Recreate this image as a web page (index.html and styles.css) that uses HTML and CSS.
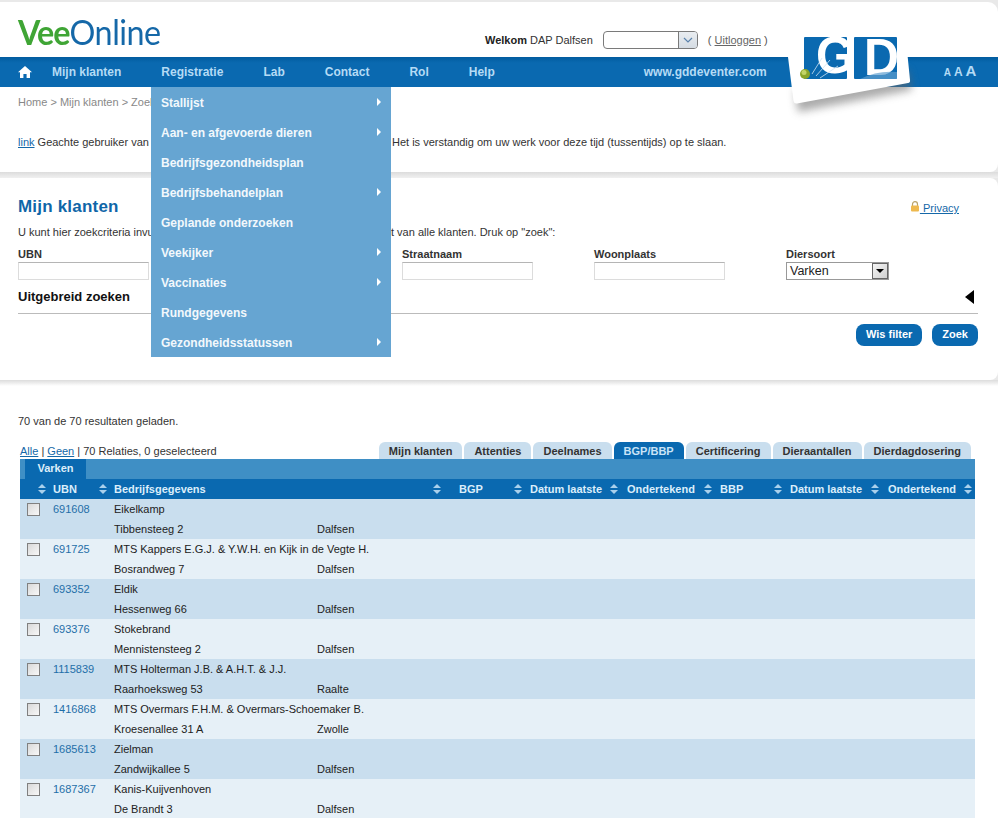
FILE: index.html
```html
<!DOCTYPE html>
<html>
<head>
<title>VeeOnline</title>
<link rel="stylesheet" href="styles.css">
</head>
<body>

<div class="top_area">
  <div class="card head_card">
    <div class="head_row">
      <div class="logo"><span class="logo_vee">Vee</span><span class="logo_online">Online</span></div>
      <div class="welcome">
        <span><b>Welkom</b> DAP Dalfsen</span>
        <span class="role_select"><span class="role_btn"><svg width="10" height="6" viewBox="0 0 10 6"><path d="M1 1 L5 5 L9 1" fill="none" stroke="#5b83ad" stroke-width="1.2"/></svg></span></span>
        <span class="logout">( <a href="#">Uitloggen</a> )</span>
      </div>
    </div>

    <div class="nav">
      <a class="nav_home" href="#"><svg width="14" height="12" viewBox="0 0 14 12"><path d="M7 0 L14 6.2 L12 6.2 L12 12 L8.6 12 L8.6 8 L5.4 8 L5.4 12 L2 12 L2 6.2 L0 6.2 Z" fill="#fff"/></svg></a>
      <a href="#">Mijn klanten</a>
      <a href="#">Registratie</a>
      <a href="#">Lab</a>
      <a href="#">Contact</a>
      <a href="#">Rol</a>
      <a href="#">Help</a>
      <a class="nav_site" href="#">www.gddeventer.com</a>
      <span class="font_sizes"><span class="fs_s">A</span><span class="fs_m">A</span><span class="fs_l">A</span></span>
    </div>

    <div class="crumbs">Home &gt; Mijn klanten &gt; Zoek</div>
    <div class="notice">
      <span class="notice_left"><a href="#">link</a> Geachte gebruiker van</span>
      <span>Het is verstandig om uw werk voor deze tijd (tussentijds) op te slaan.</span>
    </div>

    <ul class="menu">
      <li class="has_sub">Stallijst</li>
      <li class="has_sub">Aan- en afgevoerde dieren</li>
      <li>Bedrijfsgezondheidsplan</li>
      <li class="has_sub">Bedrijfsbehandelplan</li>
      <li>Geplande onderzoeken</li>
      <li class="has_sub">Veekijker</li>
      <li class="has_sub">Vaccinaties</li>
      <li>Rundgegevens</li>
      <li class="has_sub">Gezondheidsstatussen</li>
    </ul>

    <svg class="gd_logo" width="150" height="110" viewBox="780 20 150 110">
      <defs>
        <filter id="soft" x="-20%" y="-20%" width="140%" height="140%"><feGaussianBlur stdDeviation="4"/></filter>
        <clipPath id="gd_squares"><rect x="854" y="37" width="43" height="42"/></clipPath>
      </defs>
      <path d="M798 112 L912 90 L908 70 L795 90 Z" fill="#666" opacity="0.55" filter="url(#soft)"/>
      <path d="M788 57 L792 30 L905 30 L910 80 Q910.500 82.500 908 83 L797 103.500 Q794 104 793.500 101 Z" fill="#fff"/>
      <rect x="804" y="37" width="43" height="42" rx="1" fill="#0a69b0"/>
      <rect x="854" y="37" width="43" height="42" rx="1" fill="#0a69b0"/>
      <text x="816" y="73" class="gd_letter" textLength="38" lengthAdjust="spacingAndGlyphs">G</text>
      <rect x="847" y="30" width="7" height="50" fill="#fff"/>
      <g clip-path="url(#gd_squares)"><text x="864" y="75" class="gd_letter" textLength="35" lengthAdjust="spacingAndGlyphs">D</text></g>
      <path d="M812 74 L822 58 M816 76 L830 60 M820 78 L838 66" stroke="#cfe3f2" stroke-width="0.8" fill="none"/>
      <path d="M860 79 Q878 70 897 72 L897 79 Z" fill="#5f9fd0" opacity="0.7"/>
      <circle cx="805" cy="74" r="5" fill="#8aa52a"/>
      <circle cx="804" cy="72.500" r="2.500" fill="#c2d468"/>
    </svg>
  </div>

  <div class="gap_band"></div>

  <div class="card search_card">
    <div class="title_row">
      <h1>Mijn klanten</h1>
      <a class="privacy" href="#"><svg width="10" height="11" viewBox="0 0 10 11"><path d="M2.500 5 V3.200 a2.500 2.500 0 0 1 5 0 V5" fill="none" stroke="#b9a36a" stroke-width="1.200"/><rect x="1" y="4.500" width="8" height="6" rx="1" fill="#eeb94f"/></svg> Privacy</a>
    </div>
    <div class="intro">
      <span class="intro_left">U kunt hier zoekcriteria invullen</span>
      <span>t van alle klanten. Druk op "zoek":</span>
    </div>
    <div class="fields">
      <div class="field"><label>UBN</label><span class="input"></span></div>
      <div class="field"><label></label><span class="input"></span></div>
      <div class="field"><label>Straatnaam</label><span class="input"></span></div>
      <div class="field"><label>Woonplaats</label><span class="input"></span></div>
      <div class="field"><label>Diersoort</label>
        <span class="select">Varken<span class="select_btn"><i></i></span></span>
      </div>
    </div>
    <div class="more_row">
      <h2>Uitgebreid zoeken</h2>
      <i class="more_arrow"></i>
    </div>
    <div class="btn_row">
      <a class="btn" href="#">Wis filter</a>
      <a class="btn" href="#">Zoek</a>
    </div>
  </div>
</div>
<div class="bottom_band"></div>

<div class="results">
  <p class="loaded">70 van de 70 resultaten geladen.</p>

  <div class="tab_row">
    <div class="selection"><a href="#">Alle</a> | <a href="#">Geen</a> | 70 Relaties, 0 geselecteerd</div>
    <div class="tabs">
      <a href="#">Mijn klanten</a>
      <a href="#">Attenties</a>
      <a href="#">Deelnames</a>
      <a class="active" href="#">BGP/BBP</a>
      <a href="#">Certificering</a>
      <a href="#">Dieraantallen</a>
      <a href="#">Dierdagdosering</a>
    </div>
  </div>

  <div class="sub_tabs"><span>Varken</span></div>

  <table class="grid">
    <colgroup>
      <col class="c1"><col class="c2"><col class="c3"><col class="c4"><col class="c5"><col class="c6"><col class="c7"><col class="c8"><col class="c9">
    </colgroup>
    <thead>
      <tr>
        <th><div class="th_in"><span></span><svg class="sort" width="8" height="10" viewBox="0 0 8 10"><path d="M4 0 L8 4 L0 4 Z M0 6 L8 6 L4 10 Z"/></svg></div></th>
        <th><div class="th_in"><span>UBN</span><svg class="sort" width="8" height="10" viewBox="0 0 8 10"><path d="M4 0 L8 4 L0 4 Z M0 6 L8 6 L4 10 Z"/></svg></div></th>
        <th><div class="th_in"><span>Bedrijfsgegevens</span><svg class="sort" width="8" height="10" viewBox="0 0 8 10"><path d="M4 0 L8 4 L0 4 Z M0 6 L8 6 L4 10 Z"/></svg></div></th>
        <th class="th_bgp"><div class="th_in"><span>BGP</span><svg class="sort" width="8" height="10" viewBox="0 0 8 10"><path d="M4 0 L8 4 L0 4 Z M0 6 L8 6 L4 10 Z"/></svg></div></th>
        <th class="th_date"><div class="th_in"><span>Datum laatste</span><svg class="sort" width="8" height="10" viewBox="0 0 8 10"><path d="M4 0 L8 4 L0 4 Z M0 6 L8 6 L4 10 Z"/></svg></div></th>
        <th class="th_ond"><div class="th_in"><span>Ondertekend</span><svg class="sort" width="8" height="10" viewBox="0 0 8 10"><path d="M4 0 L8 4 L0 4 Z M0 6 L8 6 L4 10 Z"/></svg></div></th>
        <th class="th_date"><div class="th_in"><span>BBP</span><svg class="sort" width="8" height="10" viewBox="0 0 8 10"><path d="M4 0 L8 4 L0 4 Z M0 6 L8 6 L4 10 Z"/></svg></div></th>
        <th class="th_date"><div class="th_in"><span>Datum laatste</span><svg class="sort" width="8" height="10" viewBox="0 0 8 10"><path d="M4 0 L8 4 L0 4 Z M0 6 L8 6 L4 10 Z"/></svg></div></th>
        <th class="th_ond"><div class="th_in"><span>Ondertekend</span><svg class="sort" width="8" height="10" viewBox="0 0 8 10"><path d="M4 0 L8 4 L0 4 Z M0 6 L8 6 L4 10 Z"/></svg></div></th>
      </tr>
    </thead>
    <tbody>
      <tr><td><i class="check"></i></td><td><a href="#">691608</a></td><td><div>Eikelkamp</div><div class="addr"><span>Tibbensteeg 2</span><span>Dalfsen</span></div></td><td></td><td></td><td></td><td></td><td></td><td></td></tr>
      <tr><td><i class="check"></i></td><td><a href="#">691725</a></td><td><div>MTS Kappers E.G.J. &amp; Y.W.H. en Kijk in de Vegte H.</div><div class="addr"><span>Bosrandweg 7</span><span>Dalfsen</span></div></td><td></td><td></td><td></td><td></td><td></td><td></td></tr>
      <tr><td><i class="check"></i></td><td><a href="#">693352</a></td><td><div>Eldik</div><div class="addr"><span>Hessenweg 66</span><span>Dalfsen</span></div></td><td></td><td></td><td></td><td></td><td></td><td></td></tr>
      <tr><td><i class="check"></i></td><td><a href="#">693376</a></td><td><div>Stokebrand</div><div class="addr"><span>Mennistensteeg 2</span><span>Dalfsen</span></div></td><td></td><td></td><td></td><td></td><td></td><td></td></tr>
      <tr><td><i class="check"></i></td><td><a href="#">1115839</a></td><td><div>MTS Holterman J.B. &amp; A.H.T. &amp; J.J.</div><div class="addr"><span>Raarhoeksweg 53</span><span>Raalte</span></div></td><td></td><td></td><td></td><td></td><td></td><td></td></tr>
      <tr><td><i class="check"></i></td><td><a href="#">1416868</a></td><td><div>MTS Overmars F.H.M. &amp; Overmars-Schoemaker B.</div><div class="addr"><span>Kroesenallee 31 A</span><span>Zwolle</span></div></td><td></td><td></td><td></td><td></td><td></td><td></td></tr>
      <tr><td><i class="check"></i></td><td><a href="#">1685613</a></td><td><div>Zielman</div><div class="addr"><span>Zandwijkallee 5</span><span>Dalfsen</span></div></td><td></td><td></td><td></td><td></td><td></td><td></td></tr>
      <tr><td><i class="check"></i></td><td><a href="#">1687367</a></td><td><div>Kanis-Kuijvenhoven</div><div class="addr"><span>De Brandt 3</span><span>Dalfsen</span></div></td><td></td><td></td><td></td><td></td><td></td><td></td></tr>
    </tbody>
  </table>
</div>

</body>
</html>
```

FILE: styles.css
```css
html, body {
  height: 818px;
  overflow: hidden;
}
body {
  margin: 0;
  background: #fff;
  font-family: "Liberation Sans", Arial, sans-serif;
  font-size: 11px;
  line-height: 14px;
  color: #333;
}
a {
  color: #1568a8;
}

.top_area {
  background: #e9e9e9;
  padding-top: 2px;
}
.card {
  background: #fff;
  border-radius: 0 8px 8px 0;
}
.head_card {
  position: relative;
  height: 170px;
  border-top-right-radius: 10px;
}
.gap_band {
  height: 6px;
  background: linear-gradient(#dcdcdc, #f0f0f0);
}
.search_card {
  height: 202px;
  padding: 19px 20px 0 18px;
  box-sizing: border-box;
}
.bottom_band {
  height: 6px;
  background: linear-gradient(#dcdcdc, #fff);
}

/* header */
.head_row {
  height: 55px;
  display: flex;
  align-items: flex-start;
  padding-left: 18px;
}
.logo {
  width: 143px;
  font-family: Lato, sans-serif;
  font-size: 34px;
  line-height: 40px;
  margin-top: 10px;
  white-space: nowrap;
  transform: scaleX(0.95);
  transform-origin: left;
}
.logo_vee {
  color: #3fa535;
  font-weight: 700;
  letter-spacing: -1px;
}
.logo_online {
  color: #1568a8;
  letter-spacing: -0.500px;
}
.welcome {
  margin-left: 324px;
  margin-top: 29px;
  display: flex;
  align-items: center;
  color: #333;
}
.welcome b {
  color: #222;
}
.role_select {
  width: 93px;
  height: 16px;
  margin-left: 10px;
  border: 1px solid #7a7a7a;
  border-radius: 4px;
  display: flex;
  justify-content: flex-end;
  overflow: hidden;
}
.role_btn {
  width: 18px;
  border-left: 1px solid #7a7a7a;
  background: linear-gradient(#e9edf1, #d5dce3);
  display: flex;
  align-items: center;
  justify-content: center;
}
.logout {
  margin-left: 10px;
  color: #555;
}
.logout a {
  color: #666;
}

/* nav bar */
.nav {
  height: 30px;
  background: linear-gradient(#025c9f, #0a69b0 6px);
  display: flex;
  align-items: center;
  gap: 40px;
  padding-left: 18px;
  font-size: 12px;
  font-weight: bold;
  white-space: nowrap;
}
.nav a {
  color: #b5dbf5;
  text-decoration: none;
}
.nav_home {
  display: flex;
  margin-right: -20px;
}
.nav .nav_site {
  margin-left: 109px;
}
.font_sizes {
  margin-left: 137px;
  display: flex;
  align-items: baseline;
  gap: 3px;
  color: #b5dbf5;
}
.fs_s { font-size: 10px; }
.fs_m { font-size: 12px; }
.fs_l { font-size: 15px; }

.crumbs {
  padding: 8px 0 0 18px;
  color: #888;
}
.notice {
  margin-top: 26px;
  padding-left: 18px;
  display: flex;
}
.notice_left {
  width: 374px;
  white-space: nowrap;
}

/* dropdown */
.menu {
  position: absolute;
  top: 85px;
  left: 151px;
  width: 240px;
  margin: 0;
  padding: 0;
  list-style: none;
  background: #66a5d2;
  color: #f2f8fc;
  font-size: 12px;
  font-weight: bold;
  z-index: 5;
}
.menu li {
  height: 30px;
  line-height: 32px;
  padding-left: 10px;
  position: relative;
}
.has_sub::after {
  content: "";
  position: absolute;
  right: 10px;
  top: 11px;
  border-left: 4px solid #fff;
  border-top: 4px solid transparent;
  border-bottom: 4px solid transparent;
}

.gd_logo {
  position: absolute;
  left: 780px;
  top: 18px;
  z-index: 4;
}
.gd_letter {
  font-family: "Liberation Sans", sans-serif;
  font-size: 52px;
  font-weight: bold;
  fill: #fff;
}

/* search */
.title_row {
  display: flex;
  justify-content: space-between;
  align-items: center;
  height: 20px;
}
h1 {
  margin: 0;
  font-size: 17px;
  letter-spacing: 0.200px;
  color: #0f66a8;
}
.privacy {
  margin: 2px 19px 0 0;
  font-size: 11px;
}
.intro {
  display: flex;
  margin-top: 8px;
}
.intro_left {
  width: 373px;
  white-space: nowrap;
  overflow: hidden;
}
.fields {
  display: grid;
  grid-template-columns: repeat(5, 192px);
  margin-top: 8px;
}
.field label {
  display: block;
  font-weight: bold;
  color: #333;
  height: 15px;
}
.input {
  display: block;
  width: 129px;
  height: 16px;
  border: 1px solid #dcdcdc;
  border-top-color: #b5b5b5;
}
.select {
  display: flex;
  justify-content: space-between;
  width: 98px;
  height: 16px;
  border: 1px solid #999;
  font-size: 12.500px;
  line-height: 16px;
  padding-left: 3px;
  color: #222;
}
.select_btn {
  width: 16px;
  height: 16px;
  background: linear-gradient(135deg, #f4f4f4, #d0d0d0);
  border: 1px solid #666;
  box-sizing: border-box;
  display: flex;
  align-items: center;
  justify-content: center;
}
.select_btn i {
  border-top: 4px solid #000;
  border-left: 4px solid transparent;
  border-right: 4px solid transparent;
}
.more_row {
  display: flex;
  justify-content: space-between;
  align-items: center;
  height: 33px;
  border-bottom: 1px solid #bbb;
}
h2 {
  margin: 0;
  font-size: 13px;
  color: #111;
}
.more_arrow {
  margin-right: 4px;
  border-right: 9px solid #000;
  border-top: 7px solid transparent;
  border-bottom: 7px solid transparent;
}
.btn_row {
  display: flex;
  justify-content: flex-end;
  gap: 10px;
  margin-top: 10px;
}
.btn {
  height: 22px;
  line-height: 21px;
  padding: 0 10px;
  border-radius: 8px;
  background: #0a69b0;
  color: #fff;
  font-weight: bold;
  text-decoration: none;
}

/* results */
.results {
  padding-left: 18px;
}
.loaded {
  margin: 28px 0 0;
}
.tab_row {
  display: flex;
  justify-content: space-between;
  align-items: flex-end;
  width: 953px;
  margin: 14px 0 0 2px;
}
.selection {
  padding-bottom: 1px;
}
.tabs {
  display: flex;
  gap: 2px;
  margin-right: 2px;
}
.tabs a {
  height: 17px;
  line-height: 18px;
  padding: 0 10px;
  border-radius: 6px 6px 0 0;
  background: #c9deee;
  color: #333;
  font-weight: bold;
  text-decoration: none;
}
.tabs a.active {
  background: #0a69b0;
  color: #c9e4f7;
}
.sub_tabs {
  width: 955px;
  margin-left: 2px;
  height: 20px;
  background: #3f8fc5;
  padding-left: 5px;
  box-sizing: border-box;
}
.sub_tabs span {
  display: inline-block;
  width: 61px;
  height: 20px;
  line-height: 18px;
  text-align: center;
  background: #0a69b0;
  color: #ddeefa;
  font-weight: bold;
}
.grid {
  margin-left: 2px;
  width: 955px;
  table-layout: fixed;
  border-collapse: collapse;
}
.c1 { width: 29px; }
.c2 { width: 61px; }
.c3 { width: 334px; }
.c4 { width: 81px; }
.c5 { width: 96px; }
.c6 { width: 94px; }
.c7 { width: 70px; }
.c8 { width: 97px; }
.c9 { width: 93px; }
.grid th {
  height: 20px;
  padding: 0 3px 0 4px;
  background: #0a69b0;
  color: #dbeefb;
  font-weight: bold;
  text-align: left;
}
.grid .th_bgp {
  padding-left: 15px;
}
.grid .th_date {
  padding-left: 5px;
}
.grid .th_ond {
  padding-left: 6px;
}
.th_in {
  display: flex;
  justify-content: space-between;
  align-items: center;
}
.sort {
  fill: #a9d0ec;
  flex: none;
}
.grid td {
  height: 40px;
  padding: 0 4px;
  vertical-align: top;
  line-height: 20px;
  color: #222;
}
.grid td a {
  text-decoration: none;
  color: #1f6ea8;
}
.grid tr:nth-child(odd) td {
  background: #c9deee;
}
.grid tr:nth-child(even) td {
  background: #e6f0f7;
}
.addr {
  display: flex;
}
.addr span:first-child {
  width: 203px;
}
.check {
  display: block;
  width: 11px;
  height: 11px;
  margin: 4px 0 0 3px;
  border: 1px solid #808080;
  background: linear-gradient(135deg, #d8d8d8, #f8f8f8);
}
```
